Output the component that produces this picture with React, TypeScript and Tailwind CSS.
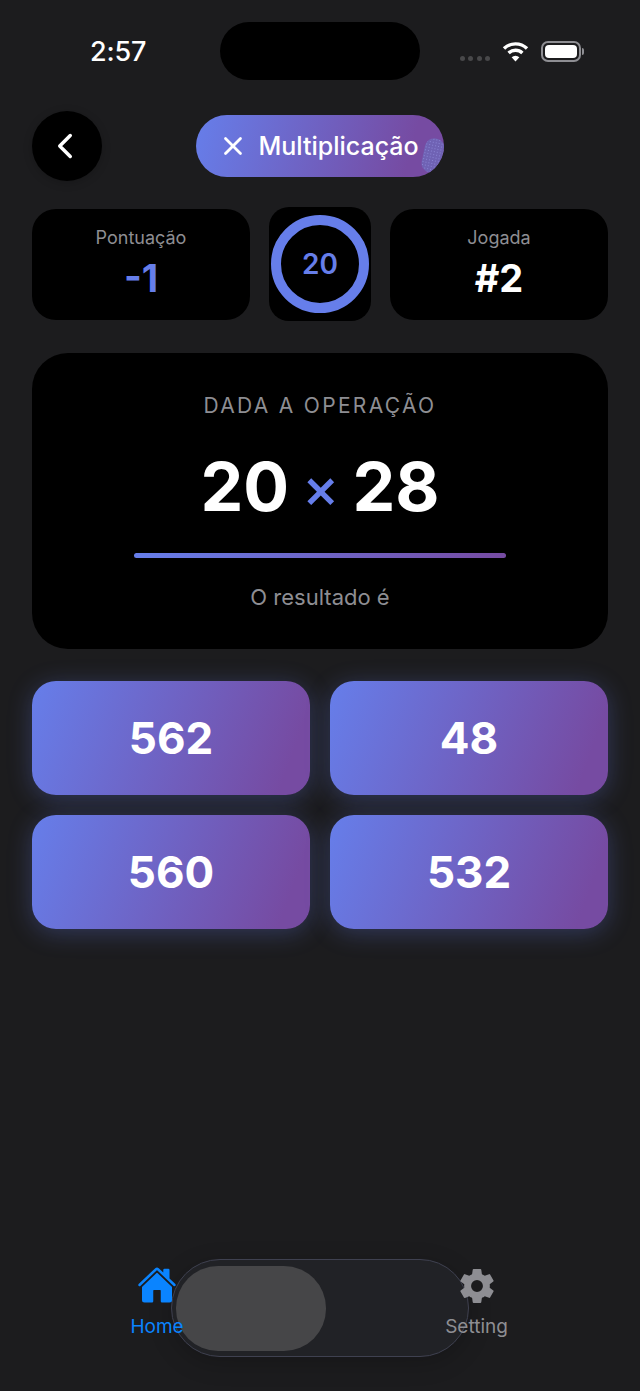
import { ChevronLeft, X } from 'lucide-react';
import { IoHome, IoSettingsSharp } from 'react-icons/io5';

const answers = ['562', '48', '560', '532'];

function StatusBar() {
  return (
    <div className="flex h-[111px] items-start pl-[90px] pr-[56px] pt-[22px]">
      <span className="mt-[13px] w-[130px] text-[27px] leading-[34px] font-medium tracking-[-0.2px] text-white">2:57</span>
      <div className="h-[58px] w-[200px] rounded-[29px] bg-black" />
      <div className="mt-[19px] flex flex-1 items-center justify-end">
        <div className="mt-[13px] flex gap-[3.5px]">
          <span className="h-[5px] w-[5px] rounded-full bg-[#48484a]" />
          <span className="h-[5px] w-[5px] rounded-full bg-[#48484a]" />
          <span className="h-[5px] w-[5px] rounded-full bg-[#48484a]" />
          <span className="h-[5px] w-[5px] rounded-full bg-[#48484a]" />
        </div>
        <svg className="ml-[12px]" width="27" height="21" viewBox="0 0 27 21" fill="none" stroke="white" strokeWidth="3.4">
          <path d="M2 7.5a16.5 16.5 0 0 1 23 0" />
          <path d="M6.6 12a10 10 0 0 1 13.8 0" />
          <path d="M13.5 20.5 9.6 16.3a5.5 5.5 0 0 1 7.8 0z" fill="white" stroke="none" />
        </svg>
        <div className="ml-[12px] flex items-center">
          <div className="h-[21px] w-[40px] rounded-[7px] border-2 border-[#8e8e93] p-[2px]">
            <div className="h-full w-full rounded-[4px] bg-white" />
          </div>
          <div className="ml-[1px] h-[7px] w-[2px] rounded-r-full bg-[#8e8e93]" />
        </div>
      </div>
    </div>
  );
}

function StatCard({ label, value, valueClass }: { label: string; value: string; valueClass: string }) {
  return (
    <div className="flex h-[111px] w-[218px] flex-col items-center rounded-[24px] bg-black pt-[19px]">
      <span className="text-[18px] leading-[20px] text-[#8e8e93]">{label}</span>
      <span className={`mt-[6px] text-[38px] leading-[48px] font-bold ${valueClass}`}>{value}</span>
    </div>
  );
}

export default function App() {
  return (
    <div className="relative flex h-[1391px] w-[640px] flex-col overflow-hidden bg-[#1c1c1e] font-['Inter',sans-serif]">
      <StatusBar />

      <div className="relative flex h-[70px] items-center justify-center px-[32px]">
        <button className="absolute left-[32px] top-0 flex h-[70px] w-[70px] items-center justify-center rounded-full bg-black text-white shadow-[0_2px_10px_rgba(0,0,0,0.2)]">
          <ChevronLeft size={42} strokeWidth={2} className="mr-[5px]" />
        </button>
        <div className="relative flex h-[62px] w-[248px] items-center justify-center gap-[10px] overflow-hidden rounded-full bg-[linear-gradient(105deg,#667eea,#764ba2_85%)] pr-[3px] text-white">
          <X size={30} strokeWidth={2.2} />
          <span className="text-[25px] leading-[30px] font-medium">Multiplicação</span>
          <div className="absolute right-[1px] top-[23px] h-[35px] w-[20px] rotate-12 rounded-full bg-[radial-gradient(#8a84d4_1px,#6f62b4_1px)] bg-[length:3px_3px]" />
        </div>
      </div>

      <div className="mt-[26px] flex items-center justify-between px-[32px]">
        <StatCard label="Pontuação" value="-1" valueClass="text-[#667eea]" />
        <div className="flex h-[114px] w-[102px] items-center justify-center rounded-[20px] bg-black">
          <div className="flex h-[98px] w-[98px] items-center justify-center rounded-full border-[10px] border-[#667eea] text-[28px] font-semibold text-[#667eea]">
            20
          </div>
        </div>
        <StatCard label="Jogada" value="#2" valueClass="text-white" />
      </div>

      <div className="mx-[32px] mt-[32px] flex h-[296px] flex-col items-center rounded-[36px] bg-black pt-[39px]">
        <span className="text-[21px] leading-[28px] tracking-[2.3px] text-[#8e8e93]">DADA A OPERAÇÃO</span>
        <div className="mt-[25px] flex h-[82px] items-center gap-[13px] text-[68px] leading-[82px] font-bold text-white">
          <span>20</span>
          <span className="mt-[4px] text-[56px] font-medium text-[#667eea]">×</span>
          <span>28</span>
        </div>
        <div className="mt-[26px] h-[5px] w-[372px] rounded-full bg-[linear-gradient(90deg,#667eea,#764ba2)]" />
        <span className="mt-[25px] text-[22px] leading-[28px] text-[#8e8e93]">O resultado é</span>
      </div>

      <div className="mx-[32px] mt-[32px] grid grid-cols-2 gap-x-[20px] gap-y-[20px]">
        {answers.map((answer) => (
          <button
            key={answer}
            className="flex h-[114px] items-center justify-center rounded-[24px] bg-[linear-gradient(110deg,#667eea,#764ba2_90%)] text-[44px] font-bold text-white shadow-[0_4px_24px_rgba(102,126,234,0.3)]"
          >
            {answer}
          </button>
        ))}
      </div>

      <div className="relative mt-auto mb-[34px] flex h-[98px] justify-center">
        <div className="absolute left-[171px] top-0 h-[98px] w-[298px] rounded-[49px] border border-[#3f4150] bg-[#212226] shadow-[0_6px_24px_rgba(0,0,0,0.2)]">
          <div className="ml-[4px] mt-[6px] h-[85px] w-[150px] rounded-[42px] bg-[#464648]" />
        </div>
        <div className="relative -ml-[1px] flex w-[377px] justify-between">
          <div className="flex w-[52px] flex-col items-center pt-[6px] text-[#0a84ff]">
            <IoHome size={40} className="shrink-0" />
            <span className="mt-[11px] text-[19px] leading-[22px]">Home</span>
          </div>
          <div className="flex w-[63px] flex-col items-center pt-[8px] text-[#8e8e93]">
            <IoSettingsSharp size={38} className="shrink-0" />
            <span className="mt-[11px] text-[19px] leading-[22px]">Setting</span>
          </div>
        </div>
      </div>
    </div>
  );
}
